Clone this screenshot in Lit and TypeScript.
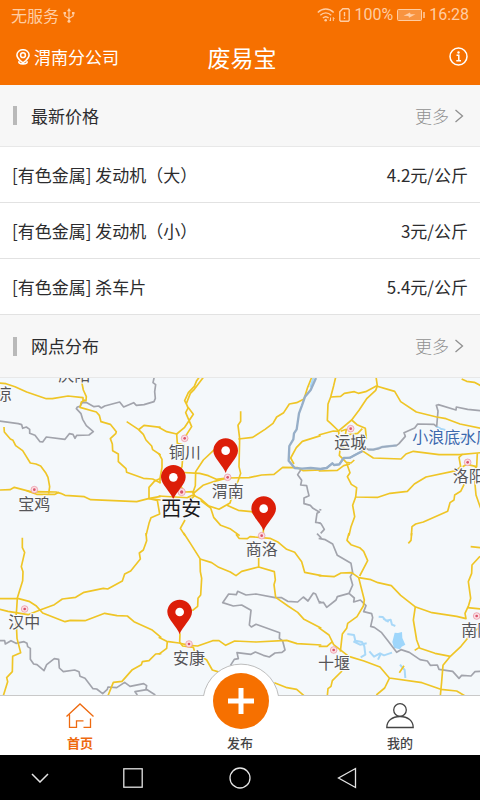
import { LitElement, html, css, svg } from "lit";
import { customElement } from "lit/decorators.js";

interface Tile {
  x: number;
  y: number;
  roads: string[];
  borders: string[];
}

// Map geometry, split into a 3 by 2 grid of tiles that share one scale.
const tiles: Tile[] = [
  {
    x: 0, y: -24,
    roads: [
      "M-4 39L18 41L45 50L80 66L139 86L157 86L204 78L249 83L249 91L258 92L259 80L250 60L246 40L243 20",
      "M256 90L244 96L240 112L289 126L298 136L303 155L331 163L349 185L347 191L331 206L337 222L338 242L355 252L355 275L378 296L380 307L430 325L458 327L482 339",
      "M380 155L415 178L430 193L438 210L455 228L458 239L482 255M415 180L432 166L482 172",
      "M12 171L13 186L31 207L39 211L47 227L68 242L91 279L108 282L122 288L138 310L144 322L149 350L146 371",
      "M-4 360L30 359L43 352L100 367L110 365L168 366L182 370L195 376L253 380L272 389L410 395L445 386L482 379",
      "M80 362L110 373L165 373L177 367",
      "M482 325L463 334L447 352L447 386L472 391L479 432L453 443L447 460L438 497M447 386L482 390",
    ],
    borders: [
      "M-4 153L55 161L65 164L68 175L79 171L89 178L89 190L105 196L120 215L128 216L139 201L195 208L208 191L219 193L225 205L230 196L267 195L280 185L259 167L248 148L243 131L229 116L232 111L240 109L247 98L258 97L282 110L296 108L304 114L314 108L359 96L371 111L401 98L409 106L432 104L462 95L466 85L464 65L467 44L459 38L463 20",
    ],
  },
  {
    x: 480, y: -24,
    roads: [
      "M-4 172L20 185L50 192L74 172L100 133L83 110L74 92L85 68L103 49L110 32L119 20M130 22L103 58L91 70L79 101L84 114L77 128L95 170L82 190L74 204",
      "M50 192L52 220L71 225L66 290L53 309L55 340L75 366",
      "M242 124L242 154L234 166L239 205L237 290L242 310L234 334L227 345L210 399L177 418L145 407L121 386L99 375L83 382",
      "M235 207L278 202L315 178L339 160L350 141L371 128L388 102L410 98L432 87L443 52L456 20",
      "M482 197L446 208L427 214L409 233L392 264L402 282",
      "M40 306L119 310L145 317L169 328L200 324L267 323L305 315L342 313L368 292L413 293L430 302L482 300",
      "M98 370L106 347L107 305L130 270L164 238M98 372L129 346L164 334L202 324",
      "M0 340L0 325L6 292L6 268L-4 250M75 366L98 365L104 377L96 384L-4 378",
      "M121 391L152 414L161 442L182 466L210 476L239 497",
      "M201 406L235 421L274 425L310 452L310 490M75 450L61 475L75 497",
    ],
    borders: [
      "M422 300L413 314L425 331L422 345L440 347L443 361L447 377L432 384L432 401L451 406L459 415L478 426L471 430L467 457L482 459",
    ],
  },
  {
    x: 960, y: -24,
    roads: [
      "M47 22L41 47L32 81L24 102L22 151L33 161L56 183L58 206L82 222M-4 195L40 183L54 184L95 150L117 121L141 85L167 61L172 48L168 20",
      "M32 81L62 79L73 70L103 65L115 70L137 65L169 48L206 59L224 64L242 95L289 126L350 141L378 146L420 162L482 175M425 27L440 34L463 37L482 47",
      "M95 150L111 164L136 175L139 204L115 220M82 222L60 240L58 256L79 277L93 279L103 270",
      "M62 184L79 178L76 195L113 190L127 176",
      "M-4 303L52 301L71 287L90 282M126 242L160 264L243 267L258 252L280 244L357 254L420 254L482 248",
      "M80 280L90 308L82 320L94 343L110 353L107 381L174 382L210 370L262 364L283 342L318 321L409 302L422 290L417 262L428 252",
      "M107 381L98 406L104 440L93 470L87 497",
      "M435 338L422 364L404 375L402 390L390 398L383 424L310 456L287 462L276 470L274 497",
      "M472 250L470 290L461 300L468 375L482 415M428 290L440 283L470 290",
    ],
    borders: [
      "M350 170L342 163L293 162L284 174L252 188L256 199L237 221L230 226L186 231L176 236L160 239L145 239L137 234L131 242L103 256L90 263L71 264L58 283L42 285L37 280L20 294L-4 297M350 170L354 123L349 106L355 104L408 120L409 111L443 118L482 122",
      "M-2 419L4 420M-4 458L3 461L13 478L2 490",
    ],
  },
  {
    x: 0, y: 471,
    roads: [
      "M67 8L67 38L74 52L64 95L69 110L68 137L52 189L50 222L48 245L51 310L62 353L38 364L37 410L20 428L23 440L10 482",
      "M-4 191L56 191L87 199L108 212L128 234L195 260L211 256L255 257L314 235L351 242L382 243L402 260L455 284L484 308",
      "M-4 222L24 229L84 239L120 225L163 209L187 192L227 187L252 172L310 160L323 162L367 138L374 117L392 108L421 72L418 54L430 45L440 17L438 -6",
      "M484 356L467 357L447 377L427 380L424 389L397 404L366 439L340 442L324 482",
    ],
    borders: [
      "M-4 317L14 317L16 327L33 317L48 325L72 320L81 325L83 335L91 340L91 373L101 387L111 389L132 407L140 389L163 371L176 373L178 399L190 410L224 405L237 410L240 424L255 430L279 461L290 462L308 476L322 463L324 456L350 458L374 442L390 454L431 446L440 452L438 462L466 480M440 464L405 470L412 480",
    ],
  },
  {
    x: 480, y: 471,
    roads: [
      "M71 -6L93 28L120 71L121 110L125 130L122 180L114 190L113 214L97 227",
      "M120 72L155 83L176 97L211 111L228 122L245 109L296 96L343 110L346 135L342 149L347 187L384 213L413 232L432 253L484 280",
      "M296 98L296 60M228 -2L237 10L262 11L270 5L330 10L355 22L380 43L404 52L425 80L434 112L484 122",
      "M-4 307L20 319L57 324L88 331L113 333L158 317L177 317L197 331L224 318L288 321L380 316L411 326L484 330",
      "M60 295L59 322L68 333L100 337L104 350L140 375L157 405L180 412L240 440M22 319L20 340L-4 358M343 443L381 458L410 463L432 482",
    ],
    borders: [
      "M211 392L223 373L235 371L231 353L273 358L286 351L310 361L328 366L345 354L366 352L375 345L368 318L358 310L359 293L288 268L274 276L268 270L273 226L245 210L220 213L188 203L206 177L229 179L233 169L258 180L288 177L345 188L365 188L383 199L413 201L430 186L444 198L460 174L467 177L477 200L484 202",
      "M471 -4L484 9",
    ],
  },
  {
    x: 960, y: 471,
    roads: [
      "M87 -6L81 16L93 29L119 38L131 49L143 77L119 123M-4 122L42 125L63 114L95 113L116 128L153 134L174 143L214 152L242 181L285 215L336 233L410 244L438 251L435 235L446 211L452 190L445 140L455 115L456 90L480 64",
      "M116 128L133 195L130 213L111 245L83 265L80 280L67 297L61 350M286 215L280 255L290 315L298 337L284 346M298 339L345 355L391 364M482 273L449 302L423 334L391 364L369 391L365 440L361 482",
      "M-4 278L27 300L41 329L86 364L132 378L180 396L208 429L306 443L362 463L410 468L434 482M-4 334L21 334L37 320M208 430L194 459L169 480M66 408L37 437L33 454L24 461L22 482",
      "M275 -6L273 16L265 25M452 35L482 38M443 218L482 222M252 392L238 413",
    ],
    borders: [
      "M-4 10L16 14L38 27L52 61L93 85L98 113L91 125L98 150L87 175L52 185L48 195L20 217L10 202L-4 204M87 175L103 189L101 201L121 195L138 212L131 230L155 236L158 248L152 274L163 277L185 293L206 320L230 352L243 344L268 352L300 374L322 378L331 391L352 390L357 403L398 409L417 430L425 421L453 423L465 410L482 409",
    ],
  },
];

const cities = [
  { name: "铜川", x: 554, y: 239, dotX: 554, dotY: 181 },
  { name: "渭南", x: 683, y: 357, dotX: 683, dotY: 298 },
  { name: "商洛", x: 785, y: 532, dotX: 785, dotY: 473 },
  { name: "安康", x: 567, y: 857, dotX: 567, dotY: 798 },
  { name: "十堰", x: 1002, y: 874, dotX: 1001, dotY: 816 },
  { name: "汉中", x: 73, y: 751, dotX: 74, dotY: 693 },
  { name: "宝鸡", x: 103, y: 395, dotX: 103, dotY: 335 },
  { name: "运城", x: 1051, y: 211, dotX: 1052, dotY: 152 },
  { name: "洛阳", x: 1406, y: 311, dotX: 1403, dotY: 253 },
  { name: "南阳", x: 1432, y: 774, dotX: 1430, dotY: 714 },
  { name: "平凉", x: -12, y: 65, dotX: -40, dotY: 10 },
  { name: "庆阳", x: 223, y: 9, dotX: 223, dotY: -50 },
];

const pins = [
  [677, 285],
  [520, 365],
  [791, 459],
  [539, 769],
];

const prices = [
  { name: "[有色金属] 发动机（大）", price: "4.2元/公斤" },
  { name: "[有色金属] 发动机（小）", price: "3元/公斤" },
  { name: "[有色金属] 杀车片", price: "5.4元/公斤" },
];

@customElement("site-map")
export class SiteMap extends LitElement {
  static styles = css`
    :host { display: block; position: relative; overflow: hidden; background: #f4f8fb; }
    .canvas { position: absolute; inset: 0; width: 100%; height: 100%; }
    .road { fill: none; stroke: #efc526; stroke-width: 5; stroke-linejoin: round; }
    .border { fill: none; stroke: #a2a4ac; stroke-width: 5; stroke-linejoin: round; }
    .river { fill: none; stroke: #96aec8; stroke-width: 7; stroke-linejoin: round; }
    .stream { fill: none; stroke: #a8d8f8; stroke-width: 6; stroke-linejoin: round; }
    .lake { fill: #9ed6fb; }
    .label {
      font: 48px "Noto Sans CJK SC", sans-serif;
      text-anchor: middle;
      fill: #555558;
      stroke: #f8fafc;
      stroke-width: 6;
      paint-order: stroke;
    }
    .capital { font-size: 60px; fill: #1c1c1e; }
    .water { text-anchor: start; fill: #3c69ae; }
    .ring { fill: #fbdfe4; stroke: #ea8c9c; stroke-width: 2; }
    .dot { fill: #d9536b; }
    .pin { fill: #dc1e08; }
    .hole { fill: #fff; }
  `;

  render() {
    return html`
      <svg class="canvas" viewBox="0 0 1440 954" preserveAspectRatio="xMidYMin slice" role="img" aria-label="网点分布">
        <path class="lake" d="M1184 764L1194 765L1206 762L1207 780L1216 800L1205 806L1200 814L1182 810L1177 792Z" />
        <path class="stream" d="M1136 716L1148 717L1158 728L1172 725L1176 740L1186 744M1150 722L1166 732M1042 768L1062 771L1066 788L1086 792L1093 805L1096 830L1082 838M1060 790L1080 800L1100 796M1108 820L1122 836L1140 826L1152 832L1176 824M1134 845L1142 828M1200 860L1214 876L1216 900" />
        <path class="stream" d="M1308 145L1322 152L1336 156M1360 178L1390 182L1440 196" />
        ${tiles.map(
          (t) => svg`<g transform="translate(${t.x} ${t.y})">
            ${t.borders.map((d) => svg`<path class="border" d=${d} />`)}
            ${t.roads.map((d) => svg`<path class="road" d=${d} />`)}
          </g>`
        )}
        <path class="stream" d="M940 0L931 28" />
        <path class="river" d="M948 0L932 36L915 56L906 82L897 106L890 154L882 166L880 184L868 204L866 248L884 270L906 272L932 270L962 273L980 270L997 256L1002 261L1018 259L1031 240L1050 239L1087 219" />
        <path class="river" d="M1105 214L1120 215L1146 207L1190 202" stroke-opacity="0.7" />
        ${cities.map(
          (c) => svg`
            <circle class="ring" cx=${c.dotX} cy=${c.dotY} r="10" />
            <circle class="dot" cx=${c.dotX} cy=${c.dotY} r="4" />
            <text class="label" x=${c.x} y=${c.y}>${c.name}</text>`
        )}
        <circle class="ring" cx="545" cy="342" r="11" />
        <circle class="dot" cx="545" cy="342" r="5" />
        <text class="label water" x="1237" y="194">小浪底水库</text>
        ${pins.map(
          ([x, y]) => svg`<g transform="translate(${x} ${y})">
            <path class="pin" d="M0 0C-7 -22 -37 -46 -37 -67A37 37 0 0 1 37 -67C37 -46 7 -22 0 0Z" />
            <circle class="hole" cy="-67" r="13" />
          </g>`
        )}
        <text class="label capital" x="544" y="414">西安</text>
      </svg>
    `;
  }
}

@customElement("app-root")
export class AppRoot extends LitElement {
  static styles = css`
    :host {
      display: flex;
      flex-direction: column;
      min-height: 100vh;
      background: #fff;
      color: #2c2c2e;
      font: 17px/24px "Noto Sans CJK SC", sans-serif;
    }
    * { box-sizing: border-box; }
    button { border: 0; padding: 0; background: none; color: inherit; font: inherit; cursor: pointer; }
    a { color: inherit; text-decoration: none; }
    svg { display: block; fill: none; stroke: currentColor; flex: none; }
    h1, h2 { margin: 0; font-weight: 400; }
    .top { background: #f67000; color: #fff; }
    .status {
      display: flex; justify-content: space-between; height: 30px; padding: 0 11px;
      color: #ffcda3; font-size: 16px; line-height: 30px;
    }
    .group { display: flex; align-items: center; gap: 4px; }
    .latin { font-family: Roboto, sans-serif; }
    .title-bar {
      display: grid; grid-template-columns: 1fr auto 1fr; align-items: center;
      height: 55px; padding: 0 12px 2px 16px;
    }
    .place { display: flex; align-items: center; gap: 4px; justify-self: start; }
    .title { font-size: 23px; line-height: 32px; }
    .info { justify-self: end; }
    .section {
      display: flex; align-items: center; height: 62px; padding: 0 16px 0 13px;
      background: #f7f7f7; border-bottom: 1px solid #e8e8e8;
    }
    .prices + .section { height: 63px; }
    .mark { width: 4px; height: 19px; margin-right: 14px; background: #b9b9b9; }
    .heading { flex: 1; font-size: 17px; line-height: 24px; }
    .more { display: flex; align-items: center; gap: 5px; color: #909090; font-weight: 300; }
    .prices { width: 100%; border-collapse: separate; border-spacing: 0; }
    .prices td { height: 56px; padding: 0 12px; border-bottom: 1px solid #e2e2e2; }
    .prices .price { text-align: right; }
    .map { flex: 1; min-height: 240px; }
    .tabs {
      position: relative; display: grid; grid-template-columns: repeat(3, 1fr);
      height: 60px; background: #fff; border-top: 1px solid #c9c9c9;
    }
    .tab {
      display: flex; flex-direction: column; align-items: center; justify-content: flex-end;
      gap: 4px; padding-bottom: 2px; color: #444; font-size: 13px; line-height: 20px; font-weight: 500;
    }
    .active { color: #ee6a10; font-weight: 700; }
    .publish { position: relative; }
    .bump { position: absolute; left: 50%; bottom: 25px; transform: translateX(-50%); }
    .system {
      display: grid; grid-template-columns: 3fr 4fr 4fr 4fr 3fr; place-items: center;
      height: 45px; background: #000; color: #e4e4e4;
    }
  `;

  private section(title: string) {
    return html`
      <div class="section">
        <span class="mark"></span>
        <h2 class="heading">${title}</h2>
        <a class="more" href="#">更多
          <svg width="10" height="14" viewBox="0 0 10 14" stroke-width="1.3"><path d="M1.500 1L8.500 7L1.500 13" /></svg>
        </a>
      </div>
    `;
  }

  render() {
    return html`
      <header class="top">
        <div class="status">
          <div class="group">
            <span>无服务</span>
            <svg width="12" height="15" viewBox="0 0 12 15" stroke-width="1.200">
              <path d="M6 2V13M1.800 5.500V8L6 10.500L10.200 8V5.500" />
              <path d="M6 0L8 3.200H4ZM.5 4H3V6.300H.5ZM9 4H11.500V6.300H9Z" fill="currentColor" stroke="none" />
              <circle cx="6" cy="13.300" r="1.500" fill="currentColor" stroke="none" />
            </svg>
          </div>
          <div class="group">
            <svg width="18" height="14" viewBox="0 0 18 14" stroke-width="1.400">
              <path d="M.8 4.500C5.500 -.2 12 -.2 16.700 4.500M3.300 7.300C6.600 4 11 4 14.200 7.300M5.900 10C7.700 8.300 9.800 8.300 11.600 10" />
              <circle cx="8.700" cy="12.300" r="1.300" fill="currentColor" stroke="none" />
              <path d="M13.500 9.500V13M12.200 11.700L13.500 13M16.300 13V9.500M16.300 9.500L17.400 10.800" stroke-width="1" />
            </svg>
            <svg width="11" height="14" viewBox="0 0 11 14" stroke-width="1.400">
              <path d="M3.800 .8H9.300L10.200 1.700V12.300L9.300 13.200H1.700L.8 12.300V3.800ZM5.500 4V8.300M5.500 9.500V11" />
            </svg>
            <span class="latin">100%</span>
            <svg width="28" height="12" viewBox="0 0 28 12">
              <rect x=".5" y=".5" width="24" height="11" rx="1" fill="#fff" fill-opacity=".25" />
              <path d="M27 3V9" stroke-width="1.500" />
              <path d="M6.500 6.800L13 3.500L13.500 5.300L18.500 5.200L12 8.700L11.500 6.900Z" fill="currentColor" stroke="none" />
            </svg>
            <span class="latin">16:28</span>
          </div>
        </div>
        <div class="title-bar">
          <button class="place">
            <svg width="14" height="16" viewBox="0 0 14 16" stroke-width="1.500">
              <path d="M4.200 11.600C2.300 9.800 .9 8 .9 6A6.100 5.300 0 0 1 13.100 6C13.100 8 11.700 9.800 9.800 11.600L7 13.800L4.200 11.600M3.300 12.300C2.200 13.600 3.500 15.100 7 15.100S11.800 13.600 10.700 12.300" />
              <circle cx="7" cy="6.200" r="2.400" />
            </svg>
            渭南分公司
          </button>
          <h1 class="title">废易宝</h1>
          <button class="info" aria-label="信息">
            <svg width="19" height="19" viewBox="0 0 19 19" stroke-width="1.500">
              <circle cx="9.500" cy="9.500" r="8.500" />
              <path d="M7.500 8.300H9.800V13.500M7.300 13.700H12" />
              <circle cx="9.500" cy="5.500" r="1.200" fill="currentColor" stroke="none" />
            </svg>
          </button>
        </div>
      </header>

      ${this.section("最新价格")}
      <table class="prices">
        <tbody>
          ${prices.map((p) => html`<tr><td>${p.name}</td><td class="price">${p.price}</td></tr>`)}
        </tbody>
      </table>
      ${this.section("网点分布")}
      <site-map class="map"></site-map>

      <nav class="tabs">
        <button class="tab active">
          <svg width="28" height="26" viewBox="0 0 28 26" stroke-width="1.300">
            <path d="M.5 13.500L14 .9L27.500 13.500M3.500 11.500V24.300H10.500V17.800H17.500M17.500 24.300H24.500V15.500" />
          </svg>
          首页
        </button>
        <button class="tab publish">
          <svg class="bump" width="80" height="68" viewBox="0 0 80 68">
            <path d="M3.500 34A38 38 0 0 1 78.500 34V68H3.500Z" fill="#fff" stroke="none" />
            <path d="M3.500 34A38 38 0 0 1 78.500 34" stroke="#bdbdbd" />
            <circle cx="41" cy="39" r="28" fill="#f67000" stroke="none" />
            <path d="M41 26V52M28 39H54" stroke="#fff" stroke-width="5" />
          </svg>
          发布
        </button>
        <button class="tab">
          <svg width="28" height="26" viewBox="0 0 28 26" stroke-width="1.300">
            <circle cx="14" cy="7" r="6.300" />
            <path d="M.8 24.500C.8 18 6 13.500 14 13.500S27.200 18 27.200 24.500Z" />
          </svg>
          我的
        </button>
      </nav>

      <div class="system">
        <button aria-label="收起"><svg width="18" height="10" viewBox="0 0 18 10" stroke-width="1.500"><path d="M1 1L9 9L17 1" /></svg></button>
        <button aria-label="最近任务"><svg width="20" height="20" viewBox="0 0 20 20" stroke-width="1.300"><rect x=".8" y=".8" width="18.400" height="18.400" /></svg></button>
        <button aria-label="主屏幕"><svg width="22" height="22" viewBox="0 0 22 22" stroke-width="1.300"><circle cx="11" cy="11" r="10" /></svg></button>
        <button aria-label="返回"><svg width="20" height="22" viewBox="0 0 20 22" stroke-width="1.300"><path d="M18.500 1.500V20.500L1.500 11Z" /></svg></button>
      </div>
    `;
  }
}
